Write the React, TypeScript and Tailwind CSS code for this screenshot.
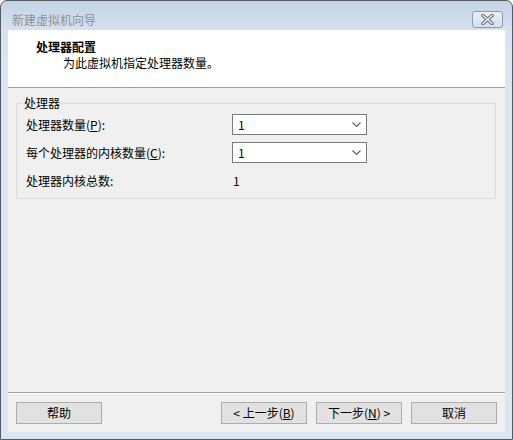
import React from "react";

const font = { fontFamily: '"Noto Sans CJK SC", "Noto Sans", sans-serif' };

const Chevron = () => (
  <svg width="9" height="6" viewBox="0 0 9 6" className="shrink-0">
    <path d="M0.5 0.5 L4.5 4.5 L8.5 0.5" fill="none" stroke="#5f5f5f" strokeWidth="1.1" />
  </svg>
);

const Combo = ({ value }: { value: string }) => (
  <div className="w-[135px] h-[21px] border border-[#7a7a7a] bg-white flex items-center justify-between pl-[5px] pr-[5px]">
    <span className="text-[12px] leading-none text-black">{value}</span>
    <Chevron />
  </div>
);

const Button = ({ children }: { children: React.ReactNode }) => (
  <button className="w-[86px] h-[22px] border border-[#adadad] bg-[#e1e1e1] text-[12px] leading-none text-black flex items-center justify-center">
    {children}
  </button>
);

const App = () => {
  return (
    <div
      style={font}
      className="w-[513px] h-[440px] rounded-t-[7px] border border-[#555a60] bg-[linear-gradient(to_bottom,#c3d3e6_0px,#d6e2f0_30px,#dbe6f3_60px,#dbe6f3_100%)] flex flex-col select-none"
    >
      {/* title bar */}
      <div className="h-[29px] flex items-start justify-between pl-[11px] pr-[9px]">
        <span className="mt-[11px] text-[12px] leading-[16px] text-[#8f9194]">新建虚拟机向导</span>
        <div className="mt-[10px] w-[31px] h-[17px] rounded-[3px] border border-[#8c9aac] bg-[linear-gradient(to_bottom,#eaf0f7,#d3dfec)] flex items-center justify-center">
          <svg width="15" height="11" viewBox="0 0 15 11">
            <path d="M3 1.5 L12 9.5 M12 1.5 L3 9.5" stroke="#6a6e73" strokeWidth="3.6" strokeLinecap="round" />
            <path d="M3 1.5 L12 9.5 M12 1.5 L3 9.5" stroke="#f2f2f2" strokeWidth="1.4" strokeLinecap="round" />
          </svg>
        </div>
      </div>

      {/* client area */}
      <div className="flex-1 mx-[7px] mb-[7px] bg-[#f0f0f0] flex flex-col">
        <div className="h-[58px] bg-white border-b border-[#a0a0a0] pt-[9px] pl-[28px]">
          <div className="text-[12px] leading-[16px] font-bold text-black">处理器配置</div>
          <div className="pl-[27px] text-[12px] leading-[16px] text-black">为此虚拟机指定处理器数量。</div>
        </div>

        <fieldset className="mt-[7px] ml-[8px] w-[480px] border border-[#dcdcdc] pl-[6px] pb-[7px]">
          <legend className="px-[1px] text-[12px] leading-[16px] text-black">处理器</legend>
          <div className="pl-[3px] pt-[3px] flex flex-col gap-[7px] text-[12px] text-black">
            <div className="h-[21px] flex items-center">
              <span className="w-[206px]">
                处理器数量(<span className="underline">P</span>):
              </span>
              <Combo value="1" />
            </div>
            <div className="h-[21px] flex items-center">
              <span className="w-[206px]">
                每个处理器的内核数量(<span className="underline">C</span>):
              </span>
              <Combo value="1" />
            </div>
            <div className="h-[21px] flex items-center">
              <span className="w-[207px]">处理器内核总数:</span>
              <span>1</span>
            </div>
          </div>
        </fieldset>

        <div className="flex-1" />

        <div className="border-t border-[#a0a0a0] shadow-[inset_0_1px_0_#ffffff] h-[40px] pt-[9px] px-[8px] flex items-start">
          <Button>帮助</Button>
          <div className="flex-1" />
          <div className="flex gap-[9px]">
            <Button>
              &lt; 上一步(<span className="underline">B</span>)
            </Button>
            <Button>
              下一步(<span className="underline">N</span>) &gt;
            </Button>
            <Button>取消</Button>
          </div>
        </div>
      </div>
    </div>
  );
};

export default App;
